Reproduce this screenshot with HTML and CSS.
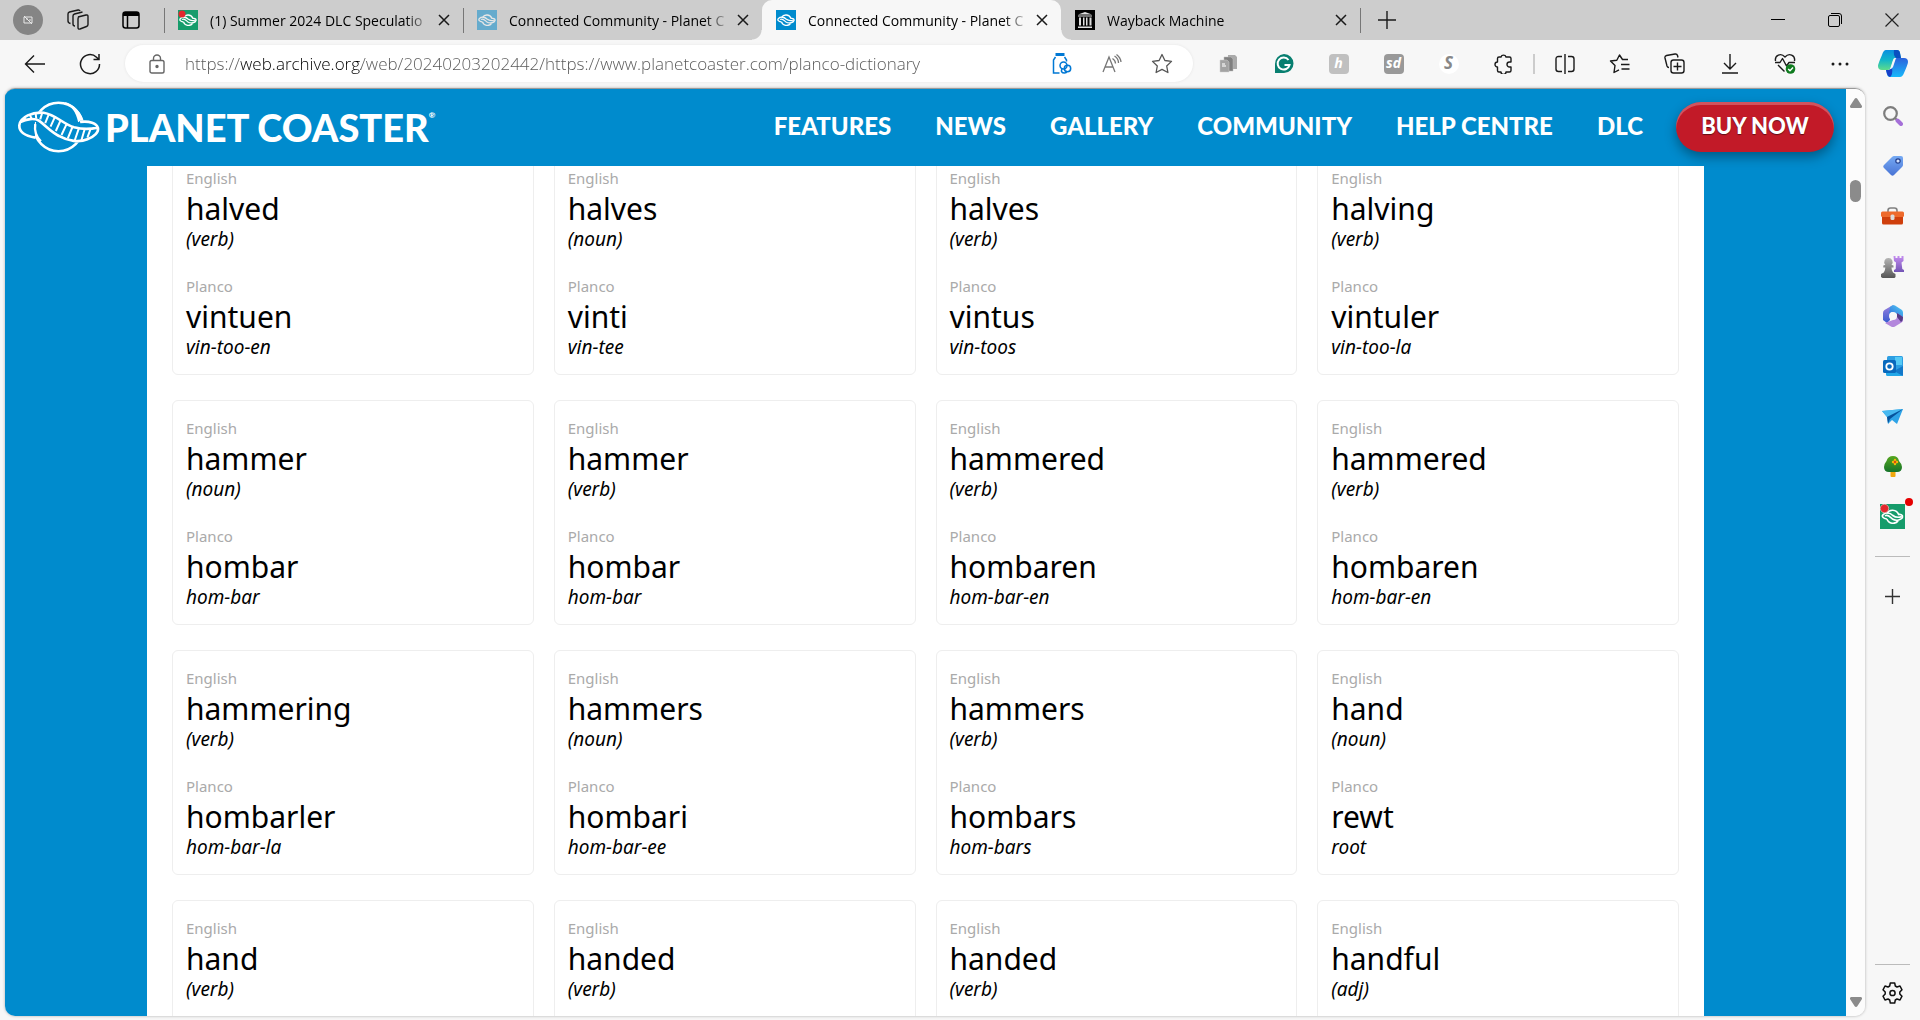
FILE: index.html
```html
<!DOCTYPE html>
<html lang="en">
<head>
<meta charset="utf-8">
<title>Connected Community - Planet Coaster</title>
<link rel="stylesheet" href="styles.css">
</head>
<body>

<svg class="defs" aria-hidden="true">
  <symbol id="planet" viewBox="50 300 250 162">
    <circle cx="175" cy="381" r="73" fill="none" stroke="currentColor" stroke-width="8"/>
    <path d="M190 305C222 311 248 340 253 372L234 366C228 336 214 318 190 305Z" fill="currentColor"/>
    <path class="hole" d="M52 380C50 352 90 330 132 336C170 344 190 372 226 376L240 362C270 362 298 366 298 386C296 414 264 428 236 428C206 428 182 416 160 402C140 388 124 362 104 366L104 414C76 412 54 400 52 380Z"/>
    <path d="M106 413C76 408 56 396 57 376C60 350 98 335 130 338C168 344 188 372 222 382C246 388 270 388 292 383M60 366C78 356 104 354 116 362C138 378 150 394 176 408C204 424 238 428 262 418C284 410 296 396 294 384C290 370 268 362 240 366" fill="none" stroke="currentColor" stroke-width="8"/>
    <path d="M71 353l7 9M88 343l6 13M106 338l2 18M126 338l-6 20M146 342l-11 27M164 351l-13 29M181 362l-14 31M199 373l-15 32M217 381l-14 34M236 386l-12 35M254 387l-10 34M272 386l-10 27" stroke="currentColor" stroke-width="6"/>
    <path d="M105 372C102 392 108 410 122 424" fill="none" stroke="currentColor" stroke-width="7"/>
  </symbol>
  <!-- simplified mark for small sizes -->
  <symbol id="planet-small" viewBox="0 0 36 24">
    <g fill="none" stroke="currentColor" stroke-width="2.600">
      <path d="M9 7C13 0 24 0 28 9M27 19C22 25 12 24 9 16"/>
      <path d="M9 16C3 15 0 12 3 9C7 5 14 6 18 10C23 14 28 14 33 12"/>
      <path d="M6 11C11 8 14 13 18 16C24 20 33 17 34 13C35 9 30 8 27 9"/>
    </g>
  </symbol>
  <symbol id="cross" viewBox="0 0 12 12">
    <path d="M1 1l10 10M11 1L1 11" stroke="currentColor" stroke-width="1.5"/>
  </symbol>
</svg>

<header class="tabstrip">
  <div class="strip-tools">
    <button class="profile" aria-label="Profile">
      <svg width="10" height="10" viewBox="0 0 10 10" fill="none" stroke="#e8e8e8"><path d="M1 2h8v6H1zM1 1l8 8M3 4h2M6 5h2"/></svg>
    </button>
    <button class="strip-button" aria-label="Workspaces">
      <svg width="22" height="22" viewBox="0 0 22 22" fill="none" stroke="#1a1a1a" stroke-width="1.4"><path d="M11 8l8-2q2-.4 2 1.500v8q0 1.500-1.500 2l-6.500 2.500q-2 .5-2-1.500V10q0-1.500 1-2zM8 17q-2 0-2-2V7q0-1.500 1.500-2l8-2M3.500 14.500Q1 14 1 12V5q0-1.500 1.500-2L11 1q1.500-.3 2 1"/></svg>
    </button>
    <button class="strip-button" aria-label="Tab actions">
      <svg width="18" height="18" viewBox="0 0 18 18" fill="none" stroke="#000" stroke-width="1.500"><rect x="1" y="1" width="16" height="16" rx="2.500"/><path d="M1 3.500h16M5.500 5v12"/><path d="M1 3h16" stroke-width="4"/></svg>
    </button>
  </div>

  <div class="tab divided">
    <svg class="favicon" viewBox="0 0 20 20"><rect width="20" height="20" fill="#169c6b"/><svg class="on-green" x="1" y="4" width="18" height="12"><use href="#planet-small"/></svg><circle cx="4" cy="4" r="3.500" fill="#e3282d"/></svg>
    <span class="tab-title">(1) Summer 2024 DLC Speculatio</span>
    <button class="tab-close" aria-label="Close tab"><svg width="12" height="12"><use href="#cross"/></svg></button>
  </div>
  <div class="tab divided">
    <svg class="favicon faded" viewBox="0 0 20 20"><rect width="20" height="20" fill="#008bcd"/><svg class="on-blue" x="1" y="4" width="18" height="12"><use href="#planet-small"/></svg></svg>
    <span class="tab-title">Connected Community - Planet C</span>
    <button class="tab-close" aria-label="Close tab"><svg width="12" height="12"><use href="#cross"/></svg></button>
  </div>
  <div class="tab active">
    <svg class="favicon" viewBox="0 0 20 20"><rect width="20" height="20" fill="#008bcd"/><svg class="on-blue" x="1" y="4" width="18" height="12"><use href="#planet-small"/></svg></svg>
    <span class="tab-title">Connected Community - Planet C</span>
    <button class="tab-close" aria-label="Close tab"><svg width="12" height="12"><use href="#cross"/></svg></button>
  </div>
  <div class="tab">
    <svg class="favicon" viewBox="0 0 20 20"><rect width="20" height="20" fill="#000"/><path d="M3 4.500L10 2l7 2.500zM3 5.500h14v1H3zM4 7.500h2v8H4zM8 7.500h1.500v8H8zM11 7.500h1.500v8H11zM14.500 7.500h2v8h-2zM3 16.500h14V18H3z" fill="#ddd"/></svg>
    <span class="tab-title">Wayback Machine</span>
    <button class="tab-close" aria-label="Close tab"><svg width="12" height="12"><use href="#cross"/></svg></button>
  </div>
  <button class="new-tab" aria-label="New tab"><svg width="18" height="18" viewBox="0 0 18 18" stroke="#1a1a1a" stroke-width="1.400"><path d="M9 0v18M0 9h18"/></svg></button>

  <div class="window-controls">
    <button aria-label="Minimize"><svg width="14" height="14" viewBox="0 0 14 14" stroke="#000"><path d="M0 6.500h14"/></svg></button>
    <button aria-label="Restore"><svg width="14" height="14" viewBox="0 0 14 14" fill="none" stroke="#000"><rect x=".5" y="2.500" width="11" height="11" rx="1.500"/><path d="M3 .5h8q2.500 0 2.500 2.500v8"/></svg></button>
    <button aria-label="Close"><svg width="14" height="14" viewBox="0 0 14 14" stroke="#222" stroke-width="1.200"><path d="M.5 .5l13 13M13.500 .5l-13 13"/></svg></button>
  </div>
</header>

<div class="toolbar">
  <button aria-label="Back"><svg width="22" height="20" viewBox="0 0 22 20" fill="none" stroke="#1a1a1a" stroke-width="1.400"><path d="M21 10H1.500M10 1.500L1.500 10l8.500 8.500"/></svg></button>
  <button aria-label="Refresh"><svg width="22" height="22" viewBox="0 0 22 22" fill="none" stroke="#1a1a1a" stroke-width="1.500"><path d="M20.500 11A9.500 9.500 0 1 1 17.500 4.200L20 6.500M20 1v5.500h-5.500"/></svg></button>

  <div class="address">
    <button class="lock" aria-label="Site information"><svg width="16" height="20" viewBox="0 0 16 20" fill="none" stroke="#666" stroke-width="1.400"><rect x="1" y="6.500" width="14" height="12.500" rx="1.800"/><path d="M4.500 6.500V4.500a3.500 3.500 0 0 1 7 0v2"/><circle cx="8" cy="12.500" r="1" fill="#666"/></svg></button>
    <input class="url" type="text" aria-label="Address" value="https://web.archive.org/web/20240203202442/https://www.planetcoaster.com/planco-dictionary">
    <button aria-label="Shopping"><svg width="20" height="22" viewBox="0 0 20 22" fill="none" stroke="#0078d4" stroke-width="1.500"><path d="M3.500 1.500h9" stroke-width="3"/><path d="M3.500 4L1.500 7v13h6M12.500 4l2 3v1.500"/><circle cx="11.500" cy="12.500" r="3.500"/><circle cx="15.500" cy="15.500" r="3.200"/><path d="M10 15.500q-1.800 4.500 2.500 4.500 2 0 2.500-2"/></svg></button>
    <button aria-label="Read aloud"><svg width="20" height="20" viewBox="0 0 20 20" fill="none" stroke="#777" stroke-width="1.300"><path d="M1 18L7 3l6 15M3 13h8M10.500 4.500q3 2 3 5M12.500 2q4 2.500 4 7M14.500 .5q4 3 4.500 7.500"/></svg></button>
    <button aria-label="Add to favorites"><svg width="22" height="22" viewBox="0 0 22 22" fill="none" stroke="#555" stroke-width="1.300" stroke-linejoin="round"><path d="M11 1.500l2.900 6 6.600.9-4.800 4.600 1.200 6.500-5.900-3.100-5.900 3.100L6.300 13 1.500 8.400l6.600-.9z"/></svg></button>
  </div>

  <button aria-label="Files extension"><svg width="19" height="20" viewBox="0 0 19 20"><path d="M9 1h7l2 2v12H9z" fill="#aaa"/><path d="M5 3h7l2 2v12H5z" fill="#808080" stroke="#bbb" stroke-width=".5"/><path d="M1 6h7l2 2v10H1z" fill="#a3a3a3" stroke="#ccc" stroke-width=".5"/><path d="M3 10h3M3 12h4" stroke="#d5d5d5" stroke-width="2"/></svg></button>
  <button aria-label="Grammarly"><svg width="20" height="20" viewBox="0 0 20 20"><path d="M10 0a9.500 9.500 0 0 1 0 19H1V10A9.500 9.500 0 0 1 10 0z" fill="#087f70"/><path d="M14.500 6A6 6 0 1 0 15.500 11H10.500" fill="none" stroke="#fff" stroke-width="2"/></svg></button>
  <button aria-label="Honey"><span class="ext-tile light">ℎ</span></button>
  <button aria-label="SD extension"><span class="ext-tile dark">sd</span></button>
  <button aria-label="S extension"><span class="ext-tile round">S</span></button>
  <button aria-label="Extensions"><svg width="20" height="20" viewBox="0 0 20 20" fill="none" stroke="#1a1a1a" stroke-width="1.400" stroke-linejoin="round"><path d="M7 3a2.600 2.600 0 0 1 5 0h3.500q1.500 0 1.500 1.500V8h-1.500a2.400 2.400 0 0 0 0 5H17v3.500q0 1.500-1.500 1.500H12a2.400 2.400 0 0 1-5 0H5q-1.500 0-1.500-1.500V13a2.500 2.500 0 0 1 0-5V4.500Q3.500 3 5 3z"/></svg></button>
  <span class="toolbar-divider"></span>
  <button aria-label="Split screen"><svg width="20" height="20" viewBox="0 0 20 20" fill="none" stroke="#1a1a1a" stroke-width="1.400"><path d="M10 0v20M7 2.500H3.500Q1 2.500 1 5v10q0 2.500 2.500 2.500H7M13 2.500h3.500Q19 2.500 19 5v10q0 2.500-2.500 2.500H13"/></svg></button>
  <button aria-label="Favorites"><svg width="21" height="20" viewBox="0 0 21 20" fill="none" stroke="#1a1a1a" stroke-width="1.400" stroke-linejoin="round"><path d="M19 5.500h-5.500L10.500 1 7.800 6.200 1.500 7l4.500 4.500-1 7 5-2.700M12 10.500h8.500M12.500 15h8"/></svg></button>
  <button aria-label="Collections"><svg width="21" height="21" viewBox="0 0 21 21" fill="none" stroke="#1a1a1a" stroke-width="1.400"><rect x="7" y="7" width="13" height="13" rx="2.500"/><path d="M13.500 9.500v8M9.500 13.500h8M5 14.500q-1.500 0-2-1.500L1 5q-.4-2 1.500-2.500L11 1q2-.3 2.500 1.500l.5 2"/></svg></button>
  <button aria-label="Downloads"><svg width="16" height="20" viewBox="0 0 16 20" fill="none" stroke="#1a1a1a" stroke-width="1.400"><path d="M8 0v15M2 9l6 6 6-6M0 19h16"/></svg></button>
  <button aria-label="Browser essentials"><svg width="22" height="21" viewBox="0 0 22 21" fill="none" stroke="#1a1a1a" stroke-width="1.400" stroke-linejoin="round"><path d="M1.500 8C.5 2 7 -.5 11 4c4-4.500 10.500-2 9.500 4M1 9.500h5l2.500-4 4 7.500 2.500-3.500h6M4 12l6.500 6.500"/><circle cx="16.500" cy="16" r="4.800" fill="#0f7b1f" stroke="none"/><path d="M14.200 16l1.800 1.800 3-3.300" stroke="#fff"/></svg></button>
  <button aria-label="Settings and more"><svg width="18" height="4" viewBox="0 0 18 4" fill="#1a1a1a"><circle cx="2" cy="2" r="1.500"/><circle cx="9" cy="2" r="1.500"/><circle cx="16" cy="2" r="1.500"/></svg></button>
  <button class="copilot" aria-label="Copilot">
    <svg width="30" height="27" viewBox="0 0 30 27">
      <defs>
        <linearGradient id="cp1" x1="0" y1="0" x2="0" y2="1"><stop offset="0" stop-color="#0b8fe0"/><stop offset=".5" stop-color="#12b6c9"/><stop offset="1" stop-color="#5fdc8b"/></linearGradient>
        <linearGradient id="cp2" x1="0" y1="0" x2="0" y2="1"><stop offset="0" stop-color="#2c62dc"/><stop offset="1" stop-color="#18b9fb"/></linearGradient>
      </defs>
      <path d="M8 0h11q2.500 0 3 3l1 5h-5q-2 0-3 3l-2 7q-1 2-3 2H4q-4 0-4-4 0-2 4-11Q5.500 0 8 0z" fill="url(#cp1)"/>
      <path d="M16 0h3q2.500 0 3 3l1 5h-5q-3-3-2-8z" fill="#0a50c0"/>
      <path d="M22 27H12q-2.500 0-3-3l-1-4h3q2 0 3-3l2-7q1-2 3-2h7q4 0 4 4 0 2-4 11-1.500 4-4 4z" fill="url(#cp2)"/>
      <path d="M8 20h3q2 0 3-3 1 8-2 10-2 0-3-3z" fill="#1740c8"/>
      <path d="M18 8h-1q-1.500 0-2 2l-3 9q2 0 3-2z" fill="#f7f7f7"/>
    </svg>
  </button>
</div>

<div class="window-body">
  <div class="viewport">
    <div class="page">
      <div class="site-header">
        <a class="logo" href="#"><svg class="logo-mark on-blue" width="83" height="54"><use href="#planet"/></svg><span class="logo-text">PLANET COASTER</span><sup>®</sup></a>
        <nav class="site-nav">
          <a href="#">FEATURES</a>
          <a href="#">NEWS</a>
          <a href="#">GALLERY</a>
          <a href="#">COMMUNITY</a>
          <a href="#">HELP CENTRE</a>
          <a href="#">DLC</a>
        </nav>
        <a class="buy" href="#">BUY NOW</a>
      </div>

      <main class="content">
        <div class="dictionary">
          <div class="entry">
            <div class="half"><p class="lang">English</p><p class="word">halved</p><p class="note">(verb)</p></div>
            <div class="half"><p class="lang">Planco</p><p class="word">vintuen</p><p class="note">vin-too-en</p></div>
          </div>
          <div class="entry">
            <div class="half"><p class="lang">English</p><p class="word">halves</p><p class="note">(noun)</p></div>
            <div class="half"><p class="lang">Planco</p><p class="word">vinti</p><p class="note">vin-tee</p></div>
          </div>
          <div class="entry">
            <div class="half"><p class="lang">English</p><p class="word">halves</p><p class="note">(verb)</p></div>
            <div class="half"><p class="lang">Planco</p><p class="word">vintus</p><p class="note">vin-toos</p></div>
          </div>
          <div class="entry">
            <div class="half"><p class="lang">English</p><p class="word">halving</p><p class="note">(verb)</p></div>
            <div class="half"><p class="lang">Planco</p><p class="word">vintuler</p><p class="note">vin-too-la</p></div>
          </div>

          <div class="entry">
            <div class="half"><p class="lang">English</p><p class="word">hammer</p><p class="note">(noun)</p></div>
            <div class="half"><p class="lang">Planco</p><p class="word">hombar</p><p class="note">hom-bar</p></div>
          </div>
          <div class="entry">
            <div class="half"><p class="lang">English</p><p class="word">hammer</p><p class="note">(verb)</p></div>
            <div class="half"><p class="lang">Planco</p><p class="word">hombar</p><p class="note">hom-bar</p></div>
          </div>
          <div class="entry">
            <div class="half"><p class="lang">English</p><p class="word">hammered</p><p class="note">(verb)</p></div>
            <div class="half"><p class="lang">Planco</p><p class="word">hombaren</p><p class="note">hom-bar-en</p></div>
          </div>
          <div class="entry">
            <div class="half"><p class="lang">English</p><p class="word">hammered</p><p class="note">(verb)</p></div>
            <div class="half"><p class="lang">Planco</p><p class="word">hombaren</p><p class="note">hom-bar-en</p></div>
          </div>

          <div class="entry">
            <div class="half"><p class="lang">English</p><p class="word">hammering</p><p class="note">(verb)</p></div>
            <div class="half"><p class="lang">Planco</p><p class="word">hombarler</p><p class="note">hom-bar-la</p></div>
          </div>
          <div class="entry">
            <div class="half"><p class="lang">English</p><p class="word">hammers</p><p class="note">(noun)</p></div>
            <div class="half"><p class="lang">Planco</p><p class="word">hombari</p><p class="note">hom-bar-ee</p></div>
          </div>
          <div class="entry">
            <div class="half"><p class="lang">English</p><p class="word">hammers</p><p class="note">(verb)</p></div>
            <div class="half"><p class="lang">Planco</p><p class="word">hombars</p><p class="note">hom-bars</p></div>
          </div>
          <div class="entry">
            <div class="half"><p class="lang">English</p><p class="word">hand</p><p class="note">(noun)</p></div>
            <div class="half"><p class="lang">Planco</p><p class="word">rewt</p><p class="note">root</p></div>
          </div>

          <div class="entry last">
            <div class="half"><p class="lang">English</p><p class="word">hand</p><p class="note">(verb)</p></div>
          </div>
          <div class="entry last">
            <div class="half"><p class="lang">English</p><p class="word">handed</p><p class="note">(verb)</p></div>
          </div>
          <div class="entry last">
            <div class="half"><p class="lang">English</p><p class="word">handed</p><p class="note">(verb)</p></div>
          </div>
          <div class="entry last">
            <div class="half"><p class="lang">English</p><p class="word">handful</p><p class="note">(adj)</p></div>
          </div>
        </div>
      </main>
    </div>

    <div class="scrollbar">
      <svg width="12" height="10" viewBox="0 0 12 10" fill="#8b8b8b"><path d="M6 0q.8 0 1.300.8L12 8q.3 1.500-1 2H1Q-.3 9.500 0 8L4.700.8Q5.200 0 6 0z"/></svg>
      <span class="thumb"></span>
      <svg width="12" height="10" viewBox="0 0 12 10" fill="#8b8b8b"><path d="M6 10q.8 0 1.300-.8L12 2q.3-1.500-1-2H1Q-.3.500 0 2l4.700 7.200Q5.200 10 6 10z"/></svg>
    </div>
  </div>

  <aside class="sidebar">
    <button aria-label="Search"><svg width="20" height="20" viewBox="0 0 20 20" fill="none"><circle cx="7.500" cy="7.500" r="6.300" stroke="#7d7d7d" stroke-width="2.200"/><path d="M12 12l2.500 2.500" stroke="#7d7d7d" stroke-width="2"/><path d="M14.500 14.500l3.500 3.500" stroke="#a56fd8" stroke-width="4" stroke-linecap="round"/></svg></button>
    <button aria-label="Shopping"><svg width="20" height="20" viewBox="0 0 20 20"><defs><linearGradient id="tag" x1="0" y1="0" x2="0" y2="1"><stop offset="0" stop-color="#76aaf3"/><stop offset="1" stop-color="#4873d5"/></linearGradient></defs><path d="M11 0h7q2 0 2 2v7q0 1-1 2l-8 8q-1.500 1.500-3 0l-7-7q-1.500-1.500 0-3L9 1q1-1 2-1z" fill="url(#tag)"/><circle cx="15" cy="5" r="2.200" fill="#cfe0ff" stroke="#233f8d" stroke-width="1.200"/></svg></button>
    <button aria-label="Tools"><svg width="23" height="18" viewBox="0 0 23 18"><path d="M7 5V3.500Q7 1 9.500 1h4Q16 1 16 3.500V5" fill="none" stroke="#808080" stroke-width="1.600"/><rect x="1" y="8" width="21" height="9.500" rx="1.500" fill="#cf3f0c"/><rect x="0" y="4.500" width="23" height="5.500" rx="1.500" fill="#ee6a2c"/><rect x="9.500" y="7.500" width="4" height="5.500" rx="1.500" fill="#dcdcdc"/></svg></button>
    <button aria-label="Games"><svg width="23" height="23" viewBox="0 0 23 23"><defs><linearGradient id="pawn" x1="0" y1="0" x2="0" y2="1"><stop offset="0" stop-color="#b5b5b5"/><stop offset="1" stop-color="#555"/></linearGradient><linearGradient id="rook" x1="0" y1="0" x2="0" y2="1"><stop offset="0" stop-color="#c58df0"/><stop offset="1" stop-color="#7254b5"/></linearGradient></defs><path d="M12.500 1h2v2h2V1h2v2h2V1h2v5l-2 1.500.8 6.500 1.700 1v2h-10v-2l1.700-1 .3-6.500-2-1.500z" fill="url(#rook)"/><path d="M7.500 3a4 4 0 0 1 3 6.800l2 .8v2h-2q0 3 1.500 5l2.500 1.500v3l-1 .9h-12L0 22v-3l2.800-1.500q1.500-2 1.500-5h-2v-2l2-.8A4 4 0 0 1 7.500 3z" fill="url(#pawn)"/></svg></button>
    <button aria-label="Microsoft 365"><svg width="20" height="22" viewBox="0 0 20 22"><defs><linearGradient id="ms" x1="0" y1="1" x2="1" y2="0"><stop offset="0" stop-color="#2f67d8"/><stop offset="1" stop-color="#52cff6"/></linearGradient><linearGradient id="ms2" x1="0" y1="0" x2="0" y2="1"><stop offset="0" stop-color="#9c80de"/><stop offset="1" stop-color="#355bd0"/></linearGradient></defs><path d="M10 0L1.500 5Q0 6 0 8v7l4 3 3-3V7.500z" fill="url(#ms2)"/><path d="M7 2l3-2q1 0 2 .5l7 4.500q1 1 1 2.500V13l-7-4-4-2-3 2z" fill="url(#ms)"/><path d="M20 12v3q0 1.500-1.500 2.500L12 21.500q-2 1-4 0L2 18l8-3 4-4V8z" fill="#b387dc"/><path d="M14 8l6 4q0 4-2 5l-4-5z" fill="#573b87"/><circle cx="10" cy="11" r="4" fill="#f7f7f7"/></svg></button>
    <button aria-label="Outlook"><svg width="20" height="20" viewBox="0 0 20 20"><rect x="4" y="0" width="16" height="17" rx="1.500" fill="#2d9ee2"/><path d="M12 1h7v8h-7z" fill="#55c9f5"/><path d="M3 12l9 3 8-5v8.500q0 1.500-1.500 1.500H4.500Q3 20 3 18.500z" fill="#22a7e8"/><path d="M11 15l9-5v10z" fill="#1378c9"/><rect x="0" y="4" width="13" height="13" rx="1.500" fill="#0869bd"/><circle cx="6.500" cy="10.500" r="3.200" fill="none" stroke="#fff" stroke-width="1.800"/></svg></button>
    <button aria-label="Drop"><svg width="21" height="15" viewBox="0 0 21 15"><path d="M0 2L21 0 15 15l-5-4-4 4-1-7z" fill="#2ea3e7"/><path d="M0 2L21 0 5 8z" fill="#48b9f0"/><path d="M5 8L21 0 8 10l-2 4.500z" fill="#07529b"/></svg></button>
    <button aria-label="Tree"><svg width="18" height="21" viewBox="0 0 18 21"><defs><linearGradient id="tree" x1="0" y1="0" x2="0" y2="1"><stop offset="0" stop-color="#56a71f"/><stop offset="1" stop-color="#15732a"/></linearGradient></defs><rect x="6.500" y="13" width="5" height="8" rx="1" fill="#f0a80e"/><path d="M9 0q5 0 6 5 3 3 3 6 0 5-5 5H5q-5 0-5-5 0-3 2.500-6Q4 0 9 0z" fill="url(#tree)"/><path d="M11 4v4M9 6h4" stroke="#f6b60a" stroke-width="2.400" stroke-linecap="round"/><circle cx="11" cy="6" r="1.200" fill="#d94a10"/></svg></button>
    <button class="badged" aria-label="Planet Coaster community"><svg width="25" height="25" viewBox="0 0 25 25"><rect width="25" height="25" fill="#169c6b"/><svg class="on-green" x="1" y="5" width="23" height="15"><use href="#planet-small"/></svg><circle cx="4.500" cy="4.500" r="4.200" fill="#e3282d" stroke="#f3c0c0" stroke-width=".7"/></svg></button>
    <hr>
    <button aria-label="Customize"><svg width="15" height="15" viewBox="0 0 15 15" stroke="#333" stroke-width="1.400"><path d="M7.500 0v15M0 7.500h15"/></svg></button>
    <hr class="bottom">
    <button class="gear" aria-label="Settings"><svg width="21" height="22" viewBox="0 0 21 22" fill="none" stroke="#111" stroke-width="1.500" stroke-linejoin="round"><path d="M8.300 1h4.400l.6 3 1.700 1 3-1 2 3.800L17.800 10v2l2.200 2.200-2 3.800-3-1-1.700 1-.6 3H8.300l-.6-3L6 17l-3 1-2-3.800L3.200 12v-2L1 7.800 3 4l3 1 1.700-1z"/><circle cx="10.500" cy="11" r="2.600"/></svg></button>
  </aside>
</div>

</body>
</html>
```
FILE: styles.css
```css
* {
    box-sizing: border-box;
}

body {
    margin: 0;
    height: 100vh;
    display: flex;
    flex-direction: column;
    overflow: hidden;
    background-color: #f7f7f7;
    font-family: "Noto Sans", sans-serif;
    color: #000;
}

button {
    display: flex;
    align-items: center;
    justify-content: center;
    padding: 0;
    border: 0;
    background: none;
    font-family: inherit;
    color: #1a1a1a;
}

p {
    margin: 0;
}

.defs {
    display: none;
}

/* logo ribbon covers the globe behind it */
.hole {
    fill: var(--ground);
}
.on-blue {
    color: #fff;
    --ground: #008bcd;
}
.on-green {
    color: #fff;
    --ground: #169c6b;
}

/* tab strip */
.tabstrip {
    display: flex;
    height: 40px;
    background-color: #cdcdcd;
}

.strip-tools {
    display: flex;
    align-items: center;
    width: 164px;
    padding-left: 13px;
}

.profile {
    width: 30px;
    height: 30px;
    margin-right: 8px;
    border-radius: 50%;
    background-color: #858585;
}

.strip-button {
    width: 53px;
    height: 40px;
}

.tab {
    position: relative;
    display: flex;
    align-items: center;
    flex: 0 1 299px;
    min-width: 0;
    padding: 0 7px 0 14px;
}

.tab.divided::before,
.new-tab::before {
    content: "";
    position: absolute;
    left: 0;
    top: 8px;
    width: 1px;
    height: 25px;
    background-color: #777;
}

.tab.active {
    background-color: #f7f7f7;
    border-radius: 10px 10px 0 0;
}

.tab.active::before,
.tab.active::after {
    content: "";
    position: absolute;
    bottom: 0;
    width: 10px;
    height: 10px;
}
.tab.active::before {
    left: -10px;
    background: radial-gradient(circle at 0 0, #cdcdcd 9px, #f7f7f7 10px);
}
.tab.active::after {
    right: -10px;
    background: radial-gradient(circle at 100% 0, #cdcdcd 9px, #f7f7f7 10px);
}

.favicon {
    flex: none;
    width: 20px;
    height: 20px;
    margin-right: 12px;
}
.favicon.faded {
    opacity: 0.5;
}

.tab-title {
    flex: 1;
    min-width: 0;
    overflow: hidden;
    white-space: nowrap;
    font-family: "Open Sans", sans-serif;
    font-size: 14px;
    -webkit-mask-image: linear-gradient(to right, #000 88%, transparent 100%);
    mask-image: linear-gradient(to right, #000 88%, transparent 100%);
}

.tab-close {
    width: 24px;
    height: 24px;
}

.new-tab {
    position: relative;
    width: 53px;
}

.window-controls {
    display: flex;
    margin-left: auto;
}
.window-controls button {
    width: 57px;
}

/* toolbar */
.toolbar {
    display: flex;
    align-items: center;
    height: 48px;
    padding: 0 1px 1px 7px;
}
.toolbar > button {
    flex: none;
    width: 55px;
    height: 40px;
}
.toolbar > .copilot {
    width: 52px;
}

.address {
    flex: 1;
    display: flex;
    align-items: center;
    min-width: 0;
    height: 37px;
    margin: 0 8px;
    padding: 0 6px 0 7px;
    border-radius: 19px;
    background-color: #fff;
    box-shadow: 0 0 3px #e4e4e4;
}
.address button {
    width: 50px;
    height: 36px;
}
.address .lock {
    margin-right: 3px;
}

.url {
    flex: 1;
    min-width: 0;
    height: 30px;
    padding: 0;
    border: 0;
    outline: 0;
    font-family: "Open Sans", sans-serif;
    font-size: 17px;
    font-weight: 300;
    color: transparent;
    background-image: linear-gradient(to right, #555 56px, #000 56px, #000 176px, #555 176px);
    -webkit-background-clip: text;
    background-clip: text;
}

.ext-tile {
    width: 20px;
    height: 20px;
    border-radius: 4px;
    text-align: center;
    line-height: 18px;
    font-size: 14px;
    font-weight: 700;
    font-style: italic;
    color: #fff;
}
.ext-tile.light {
    background-color: #c0c0c0;
}
.ext-tile.dark {
    background-color: #999;
}
.ext-tile.round {
    border-radius: 50%;
    background-color: #fff;
    color: #888;
    font-size: 17px;
}

.toolbar-divider {
    width: 2px;
    height: 20px;
    margin: 0 2px;
    background-color: #ccc;
}

/* page and sidebar */
.window-body {
    flex: 1;
    display: flex;
    min-height: 0;
}

.viewport {
    flex: 1;
    display: flex;
    min-width: 0;
    margin: 0 0 4px 5px;
    border-top: 1px solid #999;
    border-radius: 10px;
    overflow: hidden;
    box-shadow: 0 0 3px #aaa;
}

.page {
    flex: 1;
    min-width: 0;
    display: flex;
    flex-direction: column;
    background-color: #008bcd;
}

.scrollbar {
    display: flex;
    flex-direction: column;
    align-items: center;
    width: 19px;
    padding: 9px 0;
    background-color: #fcfcfc;
}
.thumb {
    width: 11px;
    height: 22px;
    margin: 72px 0 auto;
    border-radius: 6px;
    background-color: #8b8b8b;
}

.site-header {
    position: relative;
    z-index: 1;
    display: flex;
    align-items: center;
    height: 77px;
    flex: none;
    padding: 0 12px 2px;
    background-color: #008bcd;
    font-family: Lato, sans-serif;
    font-weight: 900;
}

.logo {
    display: flex;
    align-items: center;
    color: #fff;
    text-decoration: none;
}
.logo-text {
    margin-left: 5px;
    font-size: 38px;
    line-height: 40px;
}
.logo sup {
    align-self: flex-start;
    margin-top: 10px;
    font-size: 8px;
}

.site-nav {
    display: flex;
    gap: 44px;
    margin-left: auto;
    margin-right: 33px;
    padding-bottom: 2px;
}
.site-nav a,
.buy {
    font-size: 24px;
    line-height: 28px;
    color: #fff;
    text-decoration: none;
}

.buy {
    width: 158px;
    height: 50px;
    font-size: 22px;
    line-height: 48px;
    border-radius: 25px;
    text-align: center;
    background-color: #c21a28;
    box-shadow: inset 0 3px 0 rgba(255, 255, 255, 0.25), 0 5px 12px rgba(0, 0, 0, 0.35);
    text-shadow: 0 1px 1px rgba(0, 0, 0, 0.5);
}

.content {
    flex: 1;
    min-height: 0;
    margin: 0 142px;
    padding: 0 25px;
    background-color: #fff;
}

/* scrolled so the first row runs under the header */
.dictionary {
    display: grid;
    grid-template-columns: repeat(4, 1fr);
    gap: 25px 20px;
    margin-top: -16px;
}

.entry {
    padding: 15px 13px 16px;
    border: 1px solid #eee;
    border-radius: 6px;
}
.entry.last {
    padding-bottom: 60px;
}

.half + .half {
    margin-top: 24px;
}

.lang {
    font-size: 15px;
    line-height: 24px;
    color: #aaa;
}
.word {
    font-size: 30px;
    line-height: 38px;
}
.note {
    font-size: 19px;
    line-height: 22px;
    font-style: italic;
}

.sidebar {
    display: flex;
    flex-direction: column;
    align-items: center;
    width: 55px;
    padding-top: 3px;
}
.sidebar button {
    position: relative;
    flex: none;
    width: 50px;
    height: 50px;
}
.badged::after {
    content: "";
    position: absolute;
    top: 7px;
    right: 5px;
    width: 8px;
    height: 8px;
    border-radius: 50%;
    background-color: #e50000;
}
.sidebar hr {
    width: 35px;
    margin: 15px 0 14px;
    border: 0;
    border-top: 1px solid #bbb;
}
.sidebar .bottom {
    margin: auto 0 0;
}
.sidebar .gear {
    height: 55px;
}
```
